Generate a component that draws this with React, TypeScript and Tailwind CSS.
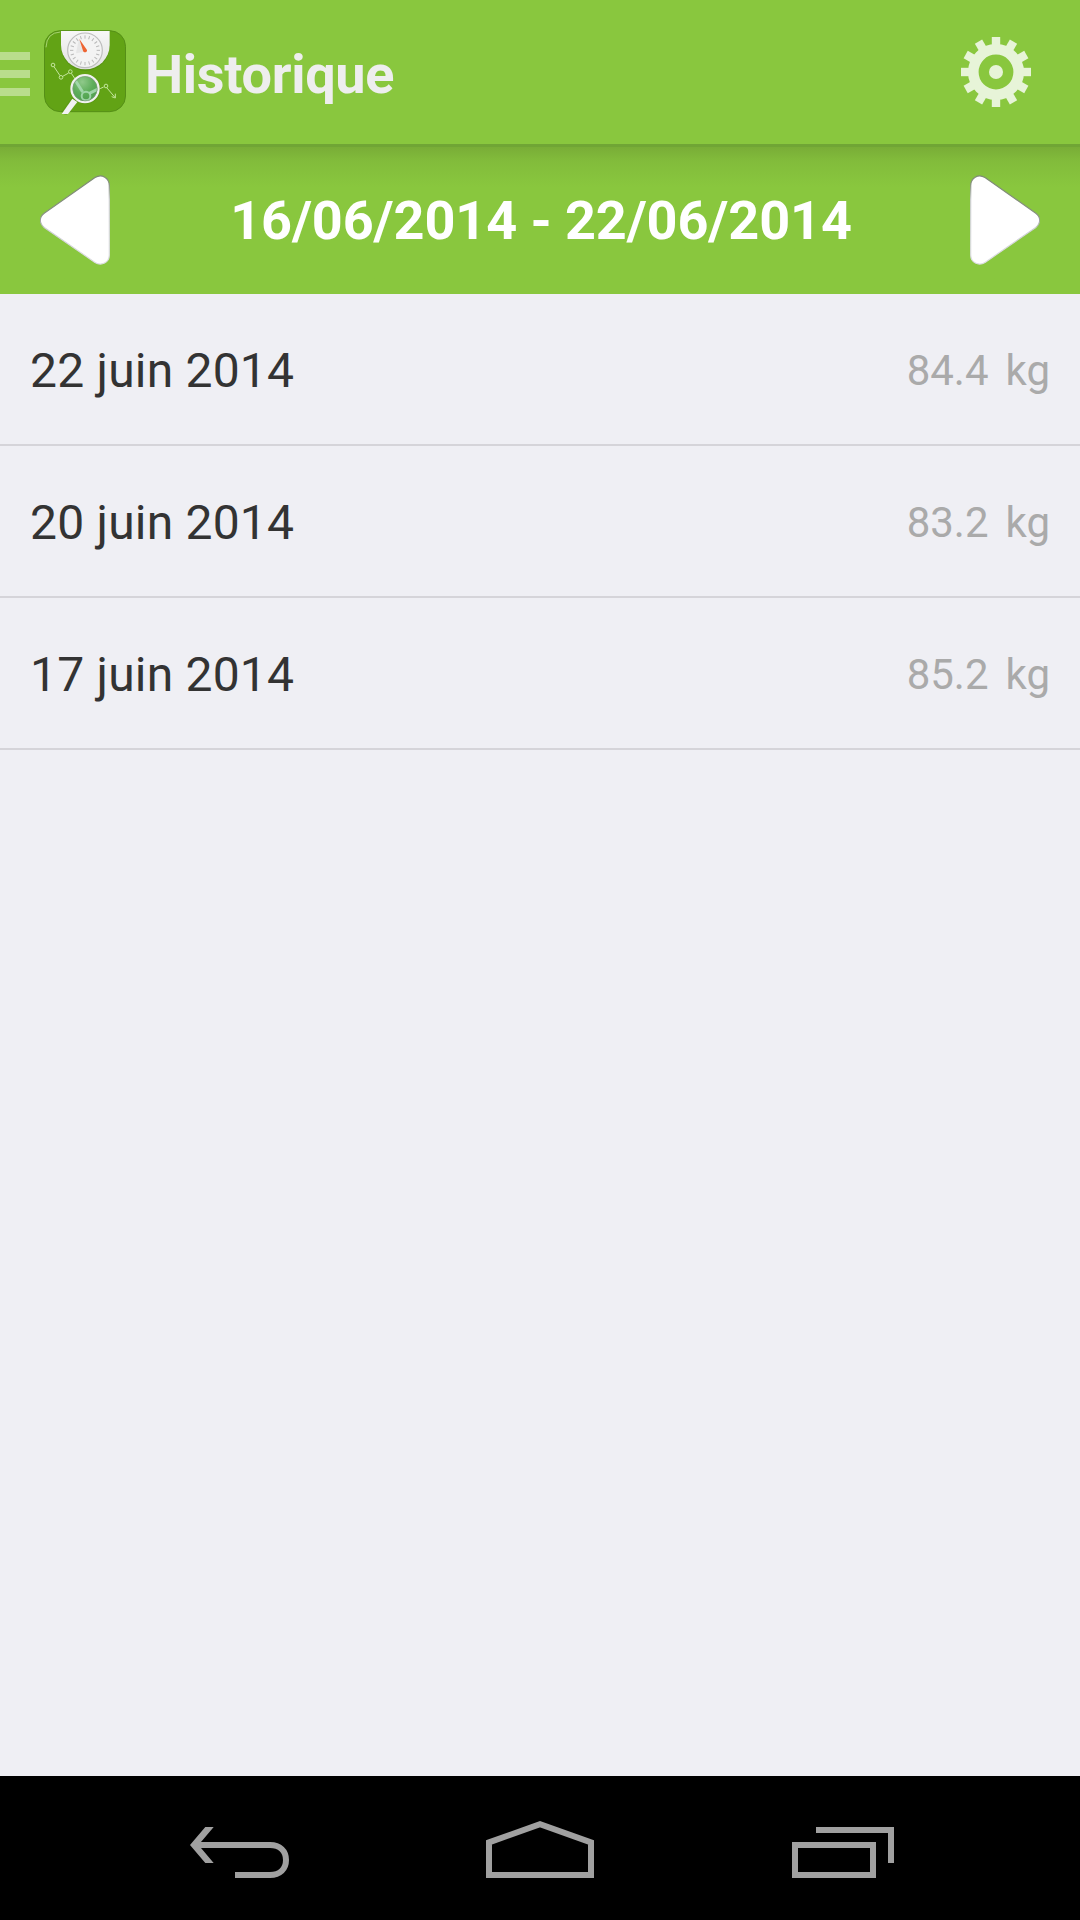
const entries = [
  { date: '22 juin 2014', weight: '84.4', unit: 'kg' },
  { date: '20 juin 2014', weight: '83.2', unit: 'kg' },
  { date: '17 juin 2014', weight: '85.2', unit: 'kg' },
]

const dialTicks = Array.from({ length: 20 }, (_, i) => i * 18)
const gearTeeth = Array.from({ length: 12 }, (_, i) => i * 30)

function AppLogo() {
  return (
    <svg className="ml-[14px] h-[85px] w-[84px] shrink-0" viewBox="42 30 252 255">
      <defs>
        <linearGradient id="scale" x1="0" y1="0" x2="0" y2="1">
          <stop offset="0" stopColor="#f7f7f7" />
          <stop offset="1" stopColor="#e2e2e2" />
        </linearGradient>
        <radialGradient id="lens" cx="0.4" cy="0.25" r="0.8">
          <stop offset="0" stopColor="#8fc98a" />
          <stop offset="0.5" stopColor="#5fae5c" />
          <stop offset="1" stopColor="#4a9c48" />
        </radialGradient>
      </defs>
      <rect x="43.5" y="32" width="243" height="243" rx="47" fill="#62a315" stroke="#558f17" strokeWidth="3" />
      <path d="M48 82 Q50 38 91 36" fill="none" stroke="#b5db84" strokeWidth="2.5" />
      <path d="M93 33 H239 V76 A73 73 0 0 1 93 76 Z" fill="#4f8a10" opacity="0.6" transform="translate(0 3)" />
      <path d="M93 33 H239 V75 A73 73 0 0 1 93 75 Z" fill="url(#scale)" />
      <circle cx="165" cy="91" r="52" fill="#f3f3f3" stroke="#bdbdbd" strokeWidth="3.5" />
      {dialTicks.map((deg) => (
        <path key={deg} d="M165 46 V56" stroke="#b9b9b9" strokeWidth="3" transform={`rotate(${deg} 165 91)`} />
      ))}
      <path d="M165 95 L147 56 L138 100 Z" fill="#cfcfcf" opacity="0.35" />
      <path d="M148 57 L171 90 Q172 97 163 97 Q160 96 159 92 Z" fill="#ee6432" />
      <g fill="none" stroke="#c4e69d" strokeWidth="3">
        <path d="M72 140 L90 167 M98 169 L116 159 M124 160 L136 178 M208 207 L221 201 M231 204 L254 231" />
        <path d="M245 230 L256 234 L256 221" />
        <circle cx="69" cy="135" r="5.5" />
        <circle cx="93" cy="172" r="5.5" />
        <circle cx="121" cy="155" r="5.5" />
        <circle cx="228" cy="198" r="5.5" />
      </g>
      <path d="M134 238 L101 282" stroke="#4f8a10" strokeWidth="19" opacity="0.35" />
      <path d="M127 236 L142 246 L114 282 H95 Z" fill="#f2f2f2" />
      <circle cx="166" cy="207" r="45" fill="#4f8a10" opacity="0.5" />
      <circle cx="165" cy="206" r="40.5" fill="url(#lens)" stroke="#f1f1f1" strokeWidth="7" />
      <g fill="none" stroke="#a9dcb4" strokeOpacity="0.85">
        <path d="M137 183 L158 216 M178 220 L202 208" strokeWidth="9" />
        <circle cx="168" cy="228" r="13" strokeWidth="6" />
      </g>
      <circle cx="165" cy="206" r="36.5" fill="none" stroke="#7d9a7c" strokeWidth="2" />
    </svg>
  )
}

function GearIcon() {
  return (
    <svg className="h-[70px] w-[70px]" viewBox="-35 -35 70 70">
      <g fill="#e7f4d8">
        {gearTeeth.map((deg) => (
          <rect key={deg} x="-4.2" y="-35" width="8.4" height="11" transform={`rotate(${deg})`} />
        ))}
        <circle r="7" />
      </g>
      <circle r="22.7" fill="none" stroke="#e7f4d8" strokeWidth="10.6" />
    </svg>
  )
}

function Arrow({ flipped = false }: { flipped?: boolean }) {
  return (
    <svg className={flipped ? 'h-[90px] w-[70px] -scale-x-100' : 'h-[90px] w-[70px]'} viewBox="0 0 70 90">
      <defs>
        <linearGradient id="edge" x1="0" y1="0" x2="0.35" y2="1">
          <stop offset="0" stopColor="#6f7f62" />
          <stop offset="0.4" stopColor="#86907f" />
          <stop offset="0.55" stopColor="#cfcfd6" />
          <stop offset="1" stopColor="#dcdce2" />
        </linearGradient>
      </defs>
      <path
        d="M4.2 38.2 L55 2.6 C62 -1.6 69.3 3 69.3 10.5 V80 C69.3 87.5 61.5 91.5 55 87.4 L4.2 52.4 C-1 48.4 -1 42 4.2 38.2 Z"
        fill="#fff"
        stroke="url(#edge)"
        strokeWidth="1.2"
      />
    </svg>
  )
}

export default function App() {
  return (
    <div className="flex h-[1920px] w-[1080px] flex-col overflow-hidden bg-[#efeff4] font-['Roboto',sans-serif]">
      {/* Action bar */}
      <header className="flex h-36 shrink-0 items-center bg-[#89c73e]">
        <div className="flex w-[30px] flex-col gap-[10px] pt-1">
          <span className="h-2 bg-[#b9dd8c]" />
          <span className="h-2 bg-[#b9dd8c]" />
          <span className="h-2 bg-[#b9dd8c]" />
        </div>
        <AppLogo />
        <h1 className="ml-[17px] flex-1 pt-[5px] text-[54px] leading-none font-bold tracking-[-0.3px] text-[#eeeeee]">
          Historique
        </h1>
        <button className="mr-[49px]">
          <GearIcon />
        </button>
      </header>

      {/* Week selector */}
      <div className="flex h-[150px] shrink-0 items-center justify-between border-t-[3px] border-[#70a535] bg-[#89c73e] bg-linear-to-b from-[#79ad37] via-[#82bc3b] via-[14px] to-[#89c73e] to-[40px] px-10 pb-[2px]">
        <Arrow />
        <span className="pt-[3px] pl-[2px] text-[54px] leading-none font-bold tracking-[-0.1px] text-white">
          16/06/2014 - 22/06/2014
        </span>
        <Arrow flipped />
      </div>

      {/* Weight entries */}
      <ul className="flex-1">
        {entries.map((entry) => (
          <li
            key={entry.date}
            className="flex h-[152px] items-center justify-between border-b-2 border-[#d5d4d9] px-[30px] pt-[3px]"
          >
            <span className="text-[48px] leading-none tracking-[0.2px] text-[#333333]">{entry.date}</span>
            <span className="flex gap-[17px] text-[42px] leading-none text-[#aaaaaa]">
              <span>{entry.weight}</span>
              <span>{entry.unit}</span>
            </span>
          </li>
        ))}
      </ul>

      {/* System navigation */}
      <nav className="flex h-36 shrink-0 items-center bg-black pl-[186px]">
        <svg className="h-[60px] w-[104px]" viewBox="0 0 104 60" fill="none" stroke="#a0a0a0" strokeWidth="6">
          <path d="M10 27 H84 C94 27 100 33 100 42 S94 57 84 57 H49" />
          <path d="M19.3 9 H27.7 L15 24 V30 L27.7 45 H19.3 L4 27 Z" fill="#a0a0a0" stroke="none" />
        </svg>
        <svg className="ml-[196px] h-[60px] w-[108px]" viewBox="0 0 108 60" fill="none" stroke="#a0a0a0" strokeWidth="6">
          <path d="M3 24.4 L54 6.2 L105 24.4 V57 H3 Z" />
        </svg>
        <svg className="ml-[198px] h-[60px] w-[102px]" viewBox="0 0 102 60" fill="none" stroke="#a0a0a0" strokeWidth="6">
          <path d="M3 27 H81 V57 H3 Z M24 12 H99 V45" />
        </svg>
      </nav>
    </div>
  )
}
